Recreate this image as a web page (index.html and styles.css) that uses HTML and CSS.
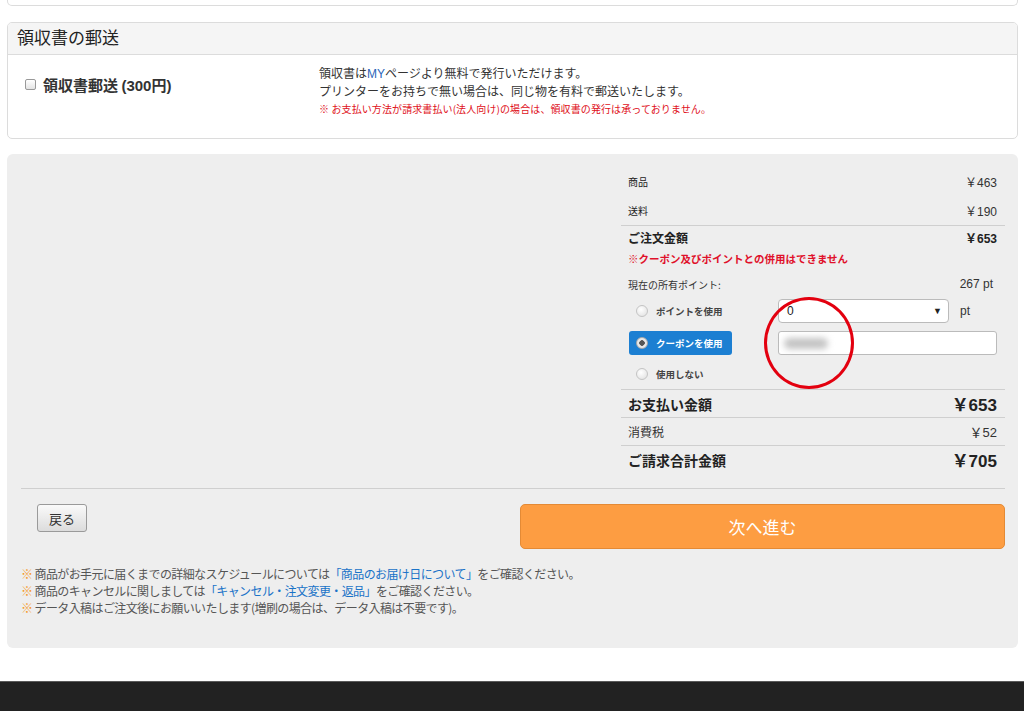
FILE: index.html
```html
<!DOCTYPE html>
<html lang="ja">
<head>
    <meta charset="UTF-8">
    <title>ご注文内容の確認</title>
    <link rel="stylesheet" href="styles.css">
</head>
<body>
    <div class="page">
        <div class="card-top"></div>

        <div class="card">
            <div class="card-head">領収書の郵送</div>
            <div class="card-body">
                <label class="receipt-check">
                    <span class="checkbox"></span>
                    <span>領収書郵送 <span class="num">(300円)</span></span>
                </label>
                <div class="receipt-note">
                    <p>領収書は<span class="num my">MY</span>ページより無料で発行いただけます。</p>
                    <p>プリンターをお持ちで無い場合は、同じ物を有料で郵送いたします。</p>
                    <p class="warn">※ お支払い方法が請求書払い(法人向け)の場合は、領収書の発行は承っておりません。</p>
                </div>
            </div>
        </div>

        <div class="panel">
            <div class="summary">
                <div class="row small">
                    <span class="label">商品</span><span class="val">￥463</span>
                </div>
                <div class="row small">
                    <span class="label">送料</span><span class="val">￥190</span>
                </div>
                <div class="row order">
                    <span class="label">ご注文金額</span><span class="val">￥653</span>
                </div>
                <div class="alert">※クーポン及びポイントとの併用はできません</div>
                <div class="row points">
                    <span class="label">現在の所有ポイント:</span><span class="val">267 pt</span>
                </div>

                <div class="choices">
                    <div class="choice">
                        <span class="opt"><span class="radio"></span>ポイントを使用</span>
                        <span class="select">0<span class="caret">▼</span></span>
                        <span class="unit">pt</span>
                    </div>
                    <div class="choice">
                        <span class="opt active"><span class="radio on"></span>クーポンを使用</span>
                        <span class="text-input"><span class="blur"></span></span>
                    </div>
                    <div class="choice">
                        <span class="opt"><span class="radio"></span>使用しない</span>
                    </div>
                    <span class="mark"></span>
                </div>

                <div class="row total">
                    <span class="label">お支払い金額</span><span class="val">￥653</span>
                </div>
                <div class="row tax">
                    <span class="label">消費税</span><span class="val">￥52</span>
                </div>
                <div class="row total">
                    <span class="label">ご請求合計金額</span><span class="val">￥705</span>
                </div>
            </div>

            <div class="actions">
                <button class="btn-back">戻る</button>
                <button class="btn-next">次へ進む</button>
            </div>

            <ul class="notes">
                <li><span class="kome">※</span> 商品がお手元に届くまでの詳細なスケジュールについては<a href="#">「商品のお届け日について」</a>をご確認ください。</li>
                <li><span class="kome">※</span> 商品のキャンセルに関しましては<a href="#">「キャンセル・注文変更・返品」</a>をご確認ください。</li>
                <li><span class="kome">※</span> データ入稿はご注文後にお願いいたします(増刷の場合は、データ入稿は不要です)。</li>
            </ul>
        </div>
    </div>

    <footer class="footer"><span class="footer-icon"></span></footer>
</body>
</html>
```

FILE: styles.css
```css
body {
    margin: 0;
    font-family: "Noto Sans CJK JP", sans-serif;
    color: #333;
    background: #fff;
}

p {
    margin: 0;
}

.num {
    font-family: "Liberation Sans", "Noto Sans CJK JP", sans-serif;
}

.page {
    padding: 0 6px 0 7px;
}

.card-top {
    height: 5px;
    border: 1px solid #dcdcdc;
    border-top: none;
    border-radius: 0 0 5px 5px;
}

.card {
    margin-top: 16px;
    border: 1px solid #dcdcdc;
    border-radius: 5px;
    overflow: hidden;
}

.card-head {
    height: 31px;
    line-height: 28px;
    padding-left: 9px;
    background: #f5f5f5;
    border-bottom: 1px solid #dcdcdc;
    font-size: 17px;
    color: #222;
}

.card-body {
    display: flex;
    height: 83px;
}

.receipt-check {
    display: flex;
    align-items: center;
    gap: 7px;
    width: 294px;
    padding: 19px 0 0 17px;
    height: 20px;
    font-size: 15px;
    font-weight: bold;
    color: #333;
}

.checkbox {
    width: 9px;
    height: 9px;
    border: 1px solid #999;
    border-radius: 2px;
    background: linear-gradient(#fff, #e4e4e4);
}

.receipt-note {
    padding-top: 9px;
    font-size: 12px;
    color: #333;
}

.receipt-note p {
    height: 18px;
    line-height: 18px;
}

.receipt-note .my {
    color: #2a64b8;
}

.receipt-note .warn {
    font-size: 10px;
    letter-spacing: 0.1px;
    color: #e0101a;
}

.panel {
    margin-top: 15px;
    padding: 13px 13px 32px 14px;
    background: #eeeeee;
    border-radius: 6px;
}

.summary {
    width: 384px;
    margin-left: auto;
}

.row {
    display: flex;
    justify-content: space-between;
    align-items: center;
    padding: 0 8px 0 7px;
}

.row .val {
    font-family: "Liberation Sans", "Noto Sans CJK JP", sans-serif;
}

.row.small {
    height: 29px;
    font-size: 12px;
}

.row.small .label {
    font-size: 10px;
    color: #222;
}

.row.small:nth-child(2) {
    border-bottom: 1px solid #cfcfcf;
}

.row.order {
    height: 23px;
    font-size: 12px;
    font-weight: bold;
    color: #222;
}

.alert {
    height: 22px;
    line-height: 20px;
    padding-left: 7px;
    font-size: 10.5px;
    font-weight: bold;
    color: #e0102a;
}

.row.points {
    height: 26px;
    font-size: 10px;
    padding-right: 12px;
}

.row.points .val {
    font-size: 12px;
}

.choices {
    position: relative;
    padding: 2px 0 5px 8px;
    border-bottom: 1px solid #cfcfcf;
    display: flex;
    flex-direction: column;
    gap: 8px;
}

.choice {
    display: flex;
    align-items: center;
    height: 24px;
}

.choice:last-of-type {
    height: 21px;
}

.opt {
    box-sizing: border-box;
    display: flex;
    align-items: center;
    gap: 8px;
    width: 103px;
    height: 24px;
    padding-left: 7px;
    margin-right: 46px;
    white-space: nowrap;
    font-size: 9.5px;
    font-weight: bold;
    color: #444;
    border-radius: 3px;
}

.opt.active {
    background: #1c7fd2;
    color: #fff;
}

.radio {
    flex: none;
    width: 10px;
    height: 10px;
    border: 1px solid #c4c4c4;
    border-radius: 50%;
    background: radial-gradient(circle at 40% 35%, #fff, #dedede);
}

.radio.on {
    background: radial-gradient(circle, #555 0 2.5px, #e8e8e8 3px);
    border-color: #aaa;
}

.select {
    position: relative;
    box-sizing: border-box;
    width: 171px;
    height: 24px;
    line-height: 22px;
    padding-left: 8px;
    background: #fff;
    border: 1px solid #bbb;
    border-radius: 4px;
    font-family: "Liberation Sans", sans-serif;
    font-size: 12px;
    color: #222;
}

.select .caret {
    position: absolute;
    right: 6px;
    top: 0;
    font-size: 9px;
}

.unit {
    margin-left: 11px;
    font-family: "Liberation Sans", sans-serif;
    font-size: 12px;
    color: #333;
}

.text-input {
    box-sizing: border-box;
    width: 219px;
    height: 24px;
    background: #fff;
    border: 1px solid #bbb;
    border-radius: 3px;
    display: flex;
    align-items: center;
    padding-left: 5px;
}

.blur {
    width: 44px;
    height: 11px;
    background: #c4c4c4;
    border-radius: 6px;
    filter: blur(3px);
}

.mark {
    position: absolute;
    left: 143px;
    top: 0;
    width: 84px;
    height: 86px;
    border: 3px solid #e3000f;
    border-radius: 50%;
}

.row.total {
    height: 27px;
    font-size: 14px;
    font-weight: bold;
    color: #222;
}

.row.total .val {
    font-size: 17px;
}

.row.tax {
    height: 27px;
    border-top: 1px solid #cfcfcf;
    border-bottom: 1px solid #cfcfcf;
    font-size: 12px;
    color: #333;
}

.row.tax .val {
    font-size: 13px;
}

.actions {
    display: flex;
    justify-content: space-between;
    align-items: flex-start;
    margin-top: 15px;
    padding-top: 15px;
    border-top: 1px solid #cfcfcf;
}

.btn-back {
    margin-left: 16px;
    width: 50px;
    height: 28px;
    font-family: "Noto Sans CJK JP", sans-serif;
    font-size: 13px;
    color: #333;
    background: linear-gradient(#fafafa, #dcdcdc);
    border: 1px solid #9a9a9a;
    border-radius: 3px;
    padding: 0;
}

.btn-next {
    width: 485px;
    height: 45px;
    font-family: "Noto Sans CJK JP", serif;
    font-size: 17px;
    color: #fff;
    background: #fd9d42;
    border: 1px solid #e48a35;
    border-radius: 5px;
}

.notes {
    list-style: none;
    margin: 16px 0 0;
    padding: 0;
    font-size: 12px;
    line-height: 17px;
    letter-spacing: -0.6px;
    color: #555;
}

.notes a {
    color: #1a73c8;
    text-decoration: none;
}

.kome {
    color: #f59a2a;
}

.footer {
    position: relative;
    margin-top: 33px;
    height: 40px;
    background: #222;
    border-top: 1px solid #5a5a5a;
}

.footer-icon {
    position: absolute;
    left: 917px;
    bottom: 0;
    width: 8px;
    height: 4px;
    background: #777;
    border-radius: 4px 4px 0 0;
}
```
